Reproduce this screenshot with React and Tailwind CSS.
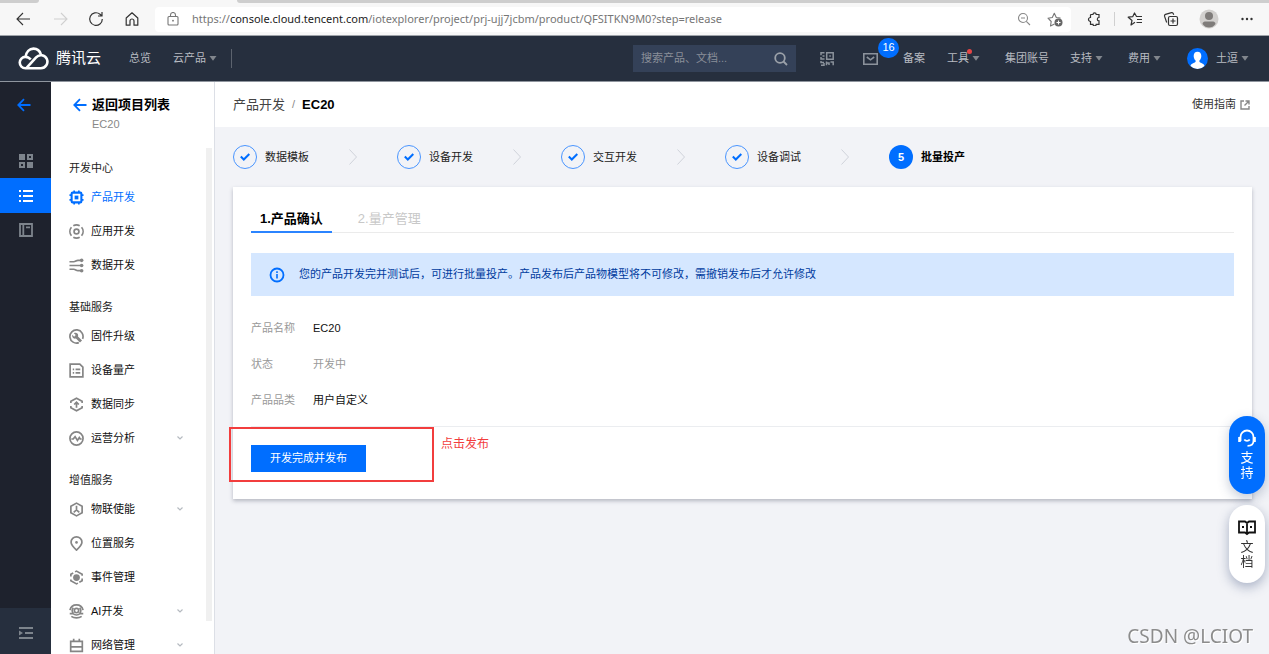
import { useState } from "react";

const NAV_GROUPS = [
  {
    title: "开发中心",
    items: [
      { name: "产品开发", icon: "chip", active: true },
      { name: "应用开发", icon: "app" },
      { name: "数据开发", icon: "flow" },
    ],
  },
  {
    title: "基础服务",
    items: [
      { name: "固件升级", icon: "wrench" },
      { name: "设备量产", icon: "sheet" },
      { name: "数据同步", icon: "sync" },
      { name: "运营分析", icon: "pulse", more: true },
    ],
  },
  {
    title: "增值服务",
    items: [
      { name: "物联使能", icon: "hexagon", more: true },
      { name: "位置服务", icon: "pin" },
      { name: "事件管理", icon: "event" },
      { name: "AI开发", icon: "ai", more: true },
      { name: "网络管理", icon: "network", more: true },
    ],
  },
];

const STEPS = ["数据模板", "设备开发", "交互开发", "设备调试", "批量投产"];

const NAV_ICONS = {
  chip: (
    <>
      <rect x="2.8" y="2.8" width="10.4" height="10.4" rx="1" strokeWidth="2.2" />
      <path d="M5.500 3V.5M10.500 3V.5M5.500 15.500V13M10.500 15.500V13M3 5.500H.5M3 10.500H.5M15.500 5.500H13M15.500 10.500H13" />
      <rect x="6" y="6" width="4" height="4" fill="currentColor" stroke="none" />
    </>
  ),
  app: (
    <>
      <circle cx="8" cy="8" r="2.6" />
      <path d="M4.600 1.900a7 7 0 0 1 6.800 0M4.600 14.100a7 7 0 0 0 6.800 0M2.600 3.500a7 7 0 0 0 0 9M13.400 3.500a7 7 0 0 1 0 9" />
    </>
  ),
  flow: (
    <>
      <path d="M.5 4h4.500c2 0 2.500-1.500 4.500-1.500H13M.5 8H13M.5 12h4.500c2 0 2.500 1.500 4.500 1.500H13" />
      <circle cx="13.500" cy="2.500" r="1.900" fill="currentColor" stroke="none" />
      <circle cx="13.500" cy="8" r="1.900" fill="currentColor" stroke="none" />
      <circle cx="13.500" cy="13.500" r="1.900" fill="currentColor" stroke="none" />
    </>
  ),
  wrench: (
    <>
      <path d="M10.500 14.500A7 7 0 1 1 14.500 10.500" />
      <path d="M5.200 4.500l2 2-1.700 1.700-2-2c-.3 1.500 0 2.500.9 3.300.9.900 2 1 3 .7l4.300 4.300 2.200-2.200-4.300-4.300c.4-1.200.1-2.300-.7-3.100-.9-.9-2.300-1.100-3.700-.4z" fill="currentColor" stroke="none" />
    </>
  ),
  sheet: (
    <>
      <path d="M1.200 1.200h10.300l3.300 3.300v10.300H1.200z" />
      <path d="M4 6.800h1.500M7 6.800h5M4 10.500h1.500M7 10.500h5" />
    </>
  ),
  sync: (
    <>
      <path d="M2 6.500V4.600L8 1.300l6 3.300v1.900M2 9.500v1.900l6 3.300 6-3.300V9.500" />
      <path d="M8 11.500V6M5.500 8L8 5.500 10.500 8" />
    </>
  ),
  pulse: (
    <>
      <circle cx="8" cy="8" r="7" />
      <path d="M2.500 8.500h2L6.500 6l2.500 4 2-3 1 1.500h1.500" />
    </>
  ),
  hexagon: (
    <>
      <path d="M8 1.200l6 3.400v6.800l-6 3.400-6-3.400V4.600z" />
      <path d="M8 4v4.500M8 8.500L5 11M8 8.500l3 2.500" />
    </>
  ),
  pin: (
    <>
      <path d="M8 15c-3.500-3.200-5.800-5.700-5.800-8.300a5.800 5.800 0 0 1 11.600 0C13.800 9.300 11.500 11.800 8 15z" />
      <circle cx="8" cy="6.800" r="1.400" fill="currentColor" stroke="none" />
    </>
  ),
  event: (
    <>
      <path d="M6.500 2L8 1.200l6 3.400v1.600M14 9v2.400l-3 1.700M9.500 14L8 14.800l-6-3.400V10M2 7V4.600l2.500-1.400" />
      <circle cx="8" cy="8" r="3.600" fill="currentColor" stroke="none" />
    </>
  ),
  ai: (
    <>
      <circle cx="8" cy="7" r="2.300" />
      <path d="M1 6.500a7.200 7.200 0 0 1 14 0M4.600 4a4.800 4.800 0 0 0 0 6M11.400 4a4.800 4.800 0 0 1 0 6M.8 10.300h3.500c2 1.600 5.400 1.600 7.400 0h3.500M2.500 13.200c3 2.200 8 2.200 11 0" />
    </>
  ),
  network: <path d="M1.800 3.500h12.400v10.700H1.800zM5 .8v3M11 .8v3M2 9.500h12" />,
};

function NavIcon({ name }) {
  return (
    <svg viewBox="0 0 16 16" className="w-[15px] h-[15px] shrink-0" fill="none" stroke="currentColor" strokeWidth="1.800">
      {NAV_ICONS[name]}
    </svg>
  );
}

function Caret() {
  return (
    <svg viewBox="0 0 8 5" className="w-2 h-[5px] shrink-0 text-[#81868d]" fill="currentColor">
      <path d="M.5 0h7L4 4.800z" />
    </svg>
  );
}

function ArrowLeft() {
  return (
    <svg viewBox="0 0 14 14" className="w-3.5 h-3.5 shrink-0 text-[#006eff]" fill="none" stroke="currentColor" strokeWidth="1.800">
      <path d="M13.500 7H1.500M7 1.200L1.300 7 7 12.800" />
    </svg>
  );
}

function BrowserBar() {
  return (
    <div className="shrink-0 bg-[#f7f7f7] border-b border-[#9ea3a9] text-[#4a4a4a]">
      <div className="flex h-1">
        <div className="w-[39px] h-[3px] bg-[#cecece] rounded-br-sm" />
        <div className="w-[198px]" />
        <div className="flex-1 h-[3px] bg-[#cecece] rounded-bl-sm" />
      </div>
      <div className="flex items-center h-[31px] pb-px pl-4">
        <button aria-label="后退">
          <svg viewBox="0 0 14 14" className="w-3.5 h-3.5" fill="none" stroke="#333" strokeWidth="1.100">
            <path d="M14 7H1M7 1L1 7l6 6" />
          </svg>
        </button>
        <button aria-label="前进" className="ml-6">
          <svg viewBox="0 0 14 14" className="w-3.5 h-3.5" fill="none" stroke="#d0d0d0" strokeWidth="1.100">
            <path d="M0 7h13M7 1l6 6-6 6" />
          </svg>
        </button>
        <button aria-label="刷新" className="ml-5">
          <svg viewBox="0 0 16 16" className="w-4 h-4" fill="none" stroke="#333" strokeWidth="1.200">
            <path d="M14.300 8A6.300 6.300 0 1 1 12 3.200l1.500 1.300M14 1v4h-4" />
          </svg>
        </button>
        <button aria-label="主页" className="ml-5">
          <svg viewBox="0 0 16 16" className="w-4 h-4" fill="none" stroke="#333" strokeWidth="1.200">
            <path d="M2.200 7L8 1.800 13.800 7v7.200H10V10a2 2 0 0 0-4 0v4.200H2.200z" strokeLinejoin="round" />
          </svg>
        </button>
        <div className="flex items-center flex-1 min-w-0 h-[25px] ml-[15px] pl-[11px] pr-2 bg-white rounded">
          <svg viewBox="0 0 14 14" className="w-3.5 h-3.5 shrink-0" fill="none" stroke="#777" strokeWidth="1.100">
            <rect x="2" y="4.500" width="10" height="8.500" rx="1" />
            <path d="M4.500 4.500V3a2.500 2.500 0 0 1 5 0v1.500" />
            <circle cx="7" cy="8.700" r="0.900" fill="#777" stroke="none" />
          </svg>
          <div className="flex-1 min-w-0 ml-3 text-[11px] text-[#767676] whitespace-nowrap overflow-hidden font-['Noto_Sans','Open_Sans',sans-serif]">
            https://<span className="text-[#1b1b1b]">console.cloud.tencent.com</span>/iotexplorer/project/prj-ujj7jcbm/product/QFSITKN9M0?step=release
          </div>
          <button aria-label="缩小">
            <svg viewBox="0 0 14 14" className="w-3.5 h-3.5" fill="none" stroke="#888" strokeWidth="1.100">
              <circle cx="6" cy="6" r="4.500" />
              <path d="M4 6h4M9.300 9.300L13 13" />
            </svg>
          </button>
          <button aria-label="收藏" className="ml-4">
            <svg viewBox="0 0 16 16" className="w-4 h-4" fill="none" stroke="#777" strokeWidth="1.100">
              <path d="M7.500 13l-4 2 .7-4.500L1 7.200l4.300-.7 2-4.200 2 4.200 4.200.6" strokeLinejoin="round" />
              <circle cx="11.500" cy="11.500" r="4" fill="#666" stroke="none" />
              <path d="M11.500 9.500v4M9.500 11.500h4" stroke="#fff" />
            </svg>
          </button>
        </div>
        <button aria-label="扩展" className="ml-4">
          <svg viewBox="0 0 14 14" className="w-3.5 h-3.5" fill="none" stroke="#333" strokeWidth="1.200">
            <path d="M4 2.500h2a1.600 1.600 0 0 1 3.200 0H12v3a1.700 1.700 0 0 0 0 3.400v3.400H9.200a1.600 1.600 0 0 1-3.200 0H3.500V9.500a2 2 0 1 1 0-4V3z" />
          </svg>
        </button>
        <div className="w-px h-3.5 ml-[13px] bg-[#d0d0d0]" />
        <button aria-label="收藏夹" className="ml-3">
          <svg viewBox="0 0 16 16" className="w-4 h-4" fill="none" stroke="#333" strokeWidth="1.200">
            <path d="M8 11.300L4 14l1-4.500L1.200 6.200l4.500-.5L7.500 2l2 3.500H15M10 8.500h5M9.500 11.500H15" strokeLinejoin="round" />
          </svg>
        </button>
        <button aria-label="集锦" className="ml-5">
          <svg viewBox="0 0 16 16" className="w-4 h-4" fill="none" stroke="#333" strokeWidth="1.200">
            <rect x="5.500" y="5.500" width="9" height="9" rx="1.500" />
            <path d="M10 7.500v5M7.500 10h5M3.700 11.500L1.500 5.200a1.500 1.500 0 0 1 1-1.800l6-1.800a1.500 1.500 0 0 1 1.800 1l.4 1.200" />
          </svg>
        </button>
        <button aria-label="个人资料" className="ml-5">
          <svg viewBox="0 0 20 20" className="w-5 h-5">
            <circle cx="10" cy="10" r="9.500" fill="#d2d0ce" />
            <circle cx="10" cy="7" r="4" fill="#7f7c7a" />
            <path d="M3.500 15c0-2 2-2.500 3-2.500h7c1 0 3 .5 3 2.500-1.500 2.500-4 3.500-6.500 3.500S5 17.500 3.500 15z" fill="#7f7c7a" />
          </svg>
        </button>
        <button aria-label="更多" className="ml-[21px] mr-[15px]">
          <svg viewBox="0 0 14 14" className="w-3.5 h-3.5" fill="#333">
            <circle cx="2.500" cy="7" r="1.200" />
            <circle cx="7" cy="7" r="1.200" />
            <circle cx="11.500" cy="7" r="1.200" />
          </svg>
        </button>
      </div>
    </div>
  );
}

function TopNav() {
  return (
    <header className="flex items-center shrink-0 h-[46px] pl-[18px] pr-5 bg-[#262f3e] border-b border-[#8f959e] text-[11px] text-[#b8bcc2] whitespace-nowrap">
      <a href="#" className="flex items-center text-white">
        <svg viewBox="0 0 31 23" className="w-[31px] h-[23px]" fill="none" stroke="currentColor" strokeWidth="2.600">
          <path d="M7.700 9.500C8.300 4.800 11.300 1.600 15.500 1.600c3.600 0 6.300 2.200 7.300 5.600" />
          <path d="M7.500 21.200h15.400a6.500 6.500 0 1 0-4.800-10.900L8.600 20.800M8 21.200h-.6a5.600 5.600 0 1 1 0-11.300c2.300 0 3.900 1 5.400 2.500" />
        </svg>
        <span className="ml-[7px] text-[15px]">腾讯云</span>
      </a>
      <a href="#" className="ml-7">总览</a>
      <button className="flex items-center gap-[3px] ml-[22px]">云产品 <Caret /></button>
      <div className="w-px h-[19px] ml-[14px] bg-[#5c636e]" />

      <label className="flex items-center w-[163px] h-[27px] ml-auto pl-2 pr-2 bg-[#344158]">
        <input
          type="text"
          aria-label="搜索"
          placeholder="搜索产品、文档..."
          className="flex-1 min-w-0 bg-transparent outline-none placeholder:text-[#8a8f98]"
        />
        <svg viewBox="0 0 14 14" className="w-3.5 h-3.5" fill="none" stroke="#9ba1a9" strokeWidth="1.800">
          <circle cx="6" cy="6" r="4.800" />
          <path d="M9.500 9.500L13 13" />
        </svg>
      </label>
      <button aria-label="二维码" className="ml-6">
        <svg viewBox="0 0 14 14" className="w-3.5 h-3.5" fill="none" stroke="#8b929b" strokeWidth="1.500">
          <path d="M6.700.8h6.500v6.500H6.700zM9.300 4h1.500M4.500.8H1v2.500M1 5v2h3.500M2.500 4h2M1 9v1.500h3M4 11v2.200H1M6.500 9.500v3.700M6.500 11H9v2M10.500 10h2.700v3.200" />
        </svg>
      </button>
      <button aria-label="消息" className="relative ml-[29px]">
        <svg viewBox="0 0 15 12" className="w-[15px] h-3" fill="none" stroke="#8b929b" strokeWidth="1.600">
          <path d="M.8.800h13.400v10.400H.8zM3.800 4L7.500 6.800 11.200 4" />
        </svg>
        <span className="absolute -top-[15px] left-[15px] flex items-center justify-center w-[21px] h-5 rounded-full bg-[#006eff] text-white text-[11px]">
          16
        </span>
      </button>
      <a href="#" className="ml-[25px]">备案</a>
      <button className="relative flex items-center gap-[3px] ml-[22px]">
        工具 <Caret />
        <span className="absolute -top-px left-5 w-[5px] h-[5px] rounded-full bg-[#e54545]" />
      </button>
      <a href="#" className="ml-[25px]">集团账号</a>
      <button className="flex items-center gap-[3px] ml-[21px]">支持 <Caret /></button>
      <button className="flex items-center gap-[3px] ml-[25px]">费用 <Caret /></button>
      <button className="flex items-center gap-[3px] ml-[26px]">
        <svg viewBox="0 0 22 22" className="w-[21px] h-[21px] mr-[5px]">
          <circle cx="11" cy="11" r="11" fill="#006eff" />
          <path d="M11 4c2.500 0 4 1.700 4 4.300 0 1.900-.8 3.700-2 4.700v1.500c0 1 5 1.500 5.300 4.300A11 11 0 0 1 11 22a11 11 0 0 1-7.300-3.200c.3-2.800 5.300-3.300 5.300-4.300V13c-1.200-1-2-2.800-2-4.700C7 5.700 8.500 4 11 4z" fill="#fff" />
        </svg>
        土逗 <Caret />
      </button>
    </header>
  );
}

function Rail() {
  return (
    <nav className="flex flex-col shrink-0 w-[51px] bg-[#1e222d] text-[#7d848c]">
      <a href="#" aria-label="返回" className="flex items-center justify-center h-[46px] pr-1 mb-4">
        <ArrowLeft />
      </a>
      <a href="#" aria-label="概览" className="flex items-center justify-center h-[34px]">
        <svg viewBox="0 0 14 14" className="w-3.5 h-3.5" fill="currentColor">
          <path d="M0 0h6v6H0zM8 8h6v6H8z" />
          <path d="M8 0h6v6H8zM10 2v2h2V2zM0 8h6v6H0zM2 10v2h2v-2z" fillRule="evenodd" />
        </svg>
      </a>
      <a href="#" aria-label="产品列表" className="flex items-center justify-center h-[35px] bg-[#006eff] text-white">
        <svg viewBox="0 0 14 12" className="w-3.5 h-3" fill="currentColor">
          <path d="M0 0h2v2H0zM4 0h10v2H4zM0 5h2v2H0zM4 5h10v2H4zM0 10h2v2H0zM4 10h10v2H4z" />
        </svg>
      </a>
      <a href="#" aria-label="文档库" className="flex items-center justify-center h-[34px]">
        <svg viewBox="0 0 14 14" className="w-3.5 h-3.5" fill="none" stroke="currentColor" strokeWidth="1.800">
          <path d="M1 1h12v12H1zM4.300 1v12M7 4.300h4" />
        </svg>
      </a>
      <button aria-label="展开菜单" className="flex items-center justify-center h-[46px] mt-auto pt-1 bg-[#262f3e]">
        <svg viewBox="0 0 14 12" className="w-3.5 h-3" fill="currentColor">
          <path d="M0 0h14v2H0zM6 5h8v2H6zM0 10h14v2H0zM0 3.500L4 6 0 8.500z" />
        </svg>
      </button>
    </nav>
  );
}

function Sidebar() {
  return (
    <aside className="flex flex-col shrink-0 w-[164px] bg-white border-r border-[#dcdfe6]">
      <div className="shrink-0 h-[61px] pt-3.5 pl-[22px]">
        <a href="#" className="flex items-center gap-[5px] text-[13px] leading-[18px] font-bold text-black">
          <ArrowLeft /> 返回项目列表
        </a>
        <p className="pl-[19px] text-[11px] leading-5 text-[#888]">EC20</p>
      </div>
      <div className="relative flex-1 min-h-0">
        <div className="h-full overflow-hidden">
          {NAV_GROUPS.map(group => (
            <section key={group.title}>
              <h2 className="pt-[13px] pl-[18px] text-[11px] leading-6 text-[#222]">{group.title}</h2>
              {group.items.map(item => (
                <a
                  key={item.name}
                  href="#"
                  className={`flex items-center h-[34px] pl-[18px] pr-[31px] text-[11px] ${
                    item.active ? "text-[#006eff]" : "text-[#858585]"
                  }`}
                >
                  <NavIcon name={item.icon} />
                  <span className={`ml-[7px] ${item.active ? "" : "text-[#111]"}`}>{item.name}</span>
                  {item.more && (
                    <svg viewBox="0 0 6 4" className="w-1.5 h-1 ml-auto" fill="none" stroke="#b5bac0" strokeWidth="1.200">
                      <path d="M.5.500L3 3 5.500.500" />
                    </svg>
                  )}
                </a>
              ))}
            </section>
          ))}
        </div>
        {/* scrollbar */}
        <div className="absolute top-[5px] bottom-[33px] right-0.5 w-1.5 bg-[#f0f0f0]" />
      </div>
    </aside>
  );
}

function Steps() {
  return (
    <ol className="flex items-center h-[60px] text-[11px] text-[#222]">
      {STEPS.map((step, i) => {
        const current = i === STEPS.length - 1;
        return (
          <li key={step} className="flex items-center">
            {current ? (
              <span className="flex items-center justify-center w-6 h-6 rounded-full bg-[#006eff] text-white font-bold">
                {i + 1}
              </span>
            ) : (
              <span className="flex items-center justify-center w-6 h-6 rounded-full border border-[#4a95ff] text-[#006eff]">
                <svg viewBox="0 0 10 8" className="w-2.5 h-2" fill="none" stroke="currentColor" strokeWidth="2">
                  <path d="M.8 3.500l3 3L9.300 1" />
                </svg>
              </span>
            )}
            <span className={`ml-2 ${current ? "font-bold text-black" : ""}`}>{step}</span>
            {!current && (
              <svg viewBox="0 0 8 16" className="w-2 h-4 mx-10" fill="none" stroke="#cfd3da">
                <path d="M.5.500L7.500 8l-7 7.500" />
              </svg>
            )}
          </li>
        );
      })}
    </ol>
  );
}

function ReleaseCard() {
  const [tab, setTab] = useState("confirm");

  return (
    <section className="relative px-[18px] pt-4 pb-[27px] bg-white shadow-[0_2px_4px_rgba(54,58,80,0.32)]">
      <div className="flex border-b border-[#ebebeb] text-[13px]">
        <button
          onClick={() => setTab("confirm")}
          className={`h-[30px] pt-1 px-[9px] -mb-px border-b-2 ${
            tab === "confirm" ? "border-[#2b84ff] font-bold text-black" : "border-transparent text-[#c8c8c8]"
          }`}
        >
          1.产品确认
        </button>
        <button
          onClick={() => setTab("manage")}
          className={`h-[30px] pt-1 px-[9px] ml-[17px] -mb-px border-b-2 ${
            tab === "manage" ? "border-[#2b84ff] font-bold text-black" : "border-transparent text-[#c8c8c8]"
          }`}
        >
          2.量产管理
        </button>
      </div>

      <div className="flex items-center h-[43px] mt-5 pl-[18px] bg-[#d5e7ff] text-[11px] text-[#003b9e]">
        <svg viewBox="0 0 16 16" className="w-4 h-4 mr-3.5 shrink-0" fill="none" stroke="#006eff" strokeWidth="1.800">
          <circle cx="8" cy="8" r="6.500" />
          <path d="M8 7v4.500M8 4.300V6" strokeWidth="1.600" />
        </svg>
        您的产品开发完并测试后，可进行批量投产。产品发布后产品物模型将不可修改，需撤销发布后才允许修改
      </div>

      <dl className="grid grid-cols-[62px_1fr] mt-3.5 text-[11px] leading-9">
        <dt className="text-[#999]">产品名称</dt>
        <dd className="text-[#111]">EC20</dd>
        <dt className="text-[#999]">状态</dt>
        <dd className="text-[#999]">开发中</dd>
        <dt className="text-[#999]">产品品类</dt>
        <dd className="text-[#111]">用户自定义</dd>
      </dl>

      <div className="mt-2 pt-[18px] border-t border-[#ebedf0]">
        <button className="block h-[27px] px-[19px] bg-[#006eff] text-[11px] text-white">开发完成并发布</button>
      </div>

      {/* callout around the publish button */}
      <div className="absolute -left-1 bottom-[17px] w-[205px] h-[55px] border-2 border-[#f23d3d]" />
      <p className="absolute left-52 bottom-[47px] text-xs leading-4 text-[#f23d3d]">点击发布</p>
    </section>
  );
}

function FloatingTools() {
  return (
    <div className="fixed right-1 bottom-[71px] flex flex-col gap-[11px] text-[13px] leading-[15px]">
      <button className="flex flex-col items-center w-9 h-[78px] pt-[13px] rounded-full bg-[#006eff] text-white shadow-[0_4px_12px_rgba(54,75,120,0.3)]">
        <svg viewBox="0 0 18 18" className="w-[18px] h-[18px] mb-[3px]" fill="none" stroke="currentColor" strokeWidth="1.800">
          <path d="M2.500 12V8a6.500 6.500 0 0 1 13 0v4c0 3-1.500 4.800-6 4.800" />
          <path d="M1.500 8v5M16.500 8v5" strokeWidth="2.600" />
          <path d="M6.300 10.500c1.200 1.800 4.200 1.800 5.400 0" />
        </svg>
        <span className="w-[13px]">支持</span>
      </button>
      <button className="flex flex-col items-center w-9 h-[78px] pt-[13px] rounded-full bg-white text-[#333] shadow-[0_4px_12px_rgba(54,75,120,0.4)]">
        <svg viewBox="0 0 18 16" className="w-[18px] h-4 mt-0.5 mb-[3px]" fill="none" stroke="#111" strokeWidth="1.800">
          <path d="M1 1.500h6L9 3l2-1.500h6v11h-6L9 14l-2-1.500H1zM9 3v12M4 7h2M12 7h2" />
        </svg>
        <span className="w-[13px]">文档</span>
      </button>
    </div>
  );
}

export default function App() {
  return (
    <div className="flex flex-col h-screen overflow-hidden bg-[#f2f3f7] font-['Liberation_Sans','Noto_Sans_CJK_SC',sans-serif]">
      <BrowserBar />
      <TopNav />
      <div className="flex flex-1 min-h-0">
        <Rail />
        <Sidebar />
        <main className="flex-1 min-w-0">
          <div className="flex items-center justify-between h-[45px] pl-[18px] pr-[19px] bg-white">
            <div className="flex items-center gap-[7px] text-[13px]">
              <a href="#" className="text-[#444]">产品开发</a>
              <span className="text-[11px] text-[#888]">/</span>
              <span className="font-bold text-black">EC20</span>
            </div>
            <a href="#" className="flex items-center gap-1 text-[11px] text-[#333]">
              使用指南
              <svg viewBox="0 0 10 10" className="w-2.5 h-2.5" fill="none" stroke="#888" strokeWidth="1.400">
                <path d="M4 1H1v8h8V6M5.500 1H9v3.500M9 1L4.500 5.500" />
              </svg>
            </a>
          </div>
          <div className="pl-[18px] pr-[17px]">
            <Steps />
            <ReleaseCard />
          </div>
        </main>
      </div>
      <FloatingTools />
      <p className="fixed right-4 bottom-1.5 text-[19px] leading-6 text-[#8c8c8c] [text-shadow:1px_1px_0_#fff] font-['Noto_Sans',sans-serif]">
        CSDN @LCIOT
      </p>
    </div>
  );
}
